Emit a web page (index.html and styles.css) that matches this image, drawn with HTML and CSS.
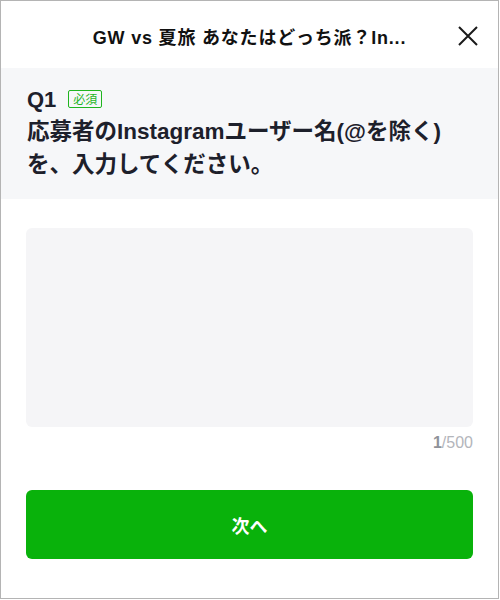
FILE: index.html
```html
<!DOCTYPE html>
<html lang="ja">
<head>
<meta charset="utf-8">
<title>GW vs 夏旅</title>
<link rel="stylesheet" href="styles.css">
</head>
<body>
<div class="frame">
  <header class="header">
    <div class="side"></div>
    <h1 class="title">GW vs 夏旅 あなたはどっち派？In...</h1>
    <div class="side close">
      <svg width="20" height="20" viewBox="0 0 20 20" aria-label="閉じる">
        <path d="M1 1 L19 19 M19 1 L1 19" stroke="#1a1a1a" stroke-width="2" fill="none"/>
      </svg>
    </div>
  </header>
  <section class="question">
    <div class="qrow">
      <span class="qnum">Q1</span>
      <span class="badge">必須</span>
    </div>
    <p class="qtext">応募者のInstagramユーザー名(@を除く)<br>を、入力してください。</p>
  </section>
  <main class="body">
    <div class="inputbox"></div>
    <div class="counter"><span class="cur">1</span>/500</div>
    <button class="next">次へ</button>
  </main>
</div>
</body>
</html>
```
FILE: styles.css
```css
html, body {
  margin: 0;
  padding: 0;
  background: #ffffff;
}
.frame {
  box-sizing: border-box;
  width: 499px;
  height: 599px;
  border: 1px solid #b4b4b4;
  display: flex;
  flex-direction: column;
  font-family: "Liberation Sans", "Noto Sans CJK JP", sans-serif;
  color: #1d202b;
  overflow: hidden;
}
.header {
  height: 67px;
  display: grid;
  grid-template-columns: 60px 1fr 60px;
  align-items: center;
  flex-shrink: 0;
}
.title {
  margin: 0;
  text-align: center;
  font-size: 18px;
  font-weight: 600;
  letter-spacing: 0.8px;
  white-space: nowrap;
  color: #111111;
  padding-top: 2px;
}
.close {
  display: flex;
  justify-content: center;
  align-items: center;
  padding-top: 2px;
}
.question {
  background: #f6f7f9;
  height: 131px;
  box-sizing: border-box;
  padding: 19px 26px 0;
  flex-shrink: 0;
}
.qrow {
  display: flex;
  align-items: center;
  gap: 12px;
  height: 25px;
}
.qnum {
  font-size: 22px;
  font-weight: bold;
  line-height: 25px;
}
.badge {
  box-sizing: border-box;
  height: 18px;
  padding: 0 4px;
  border: 1px solid #1fb51f;
  border-radius: 2px;
  color: #1fb51f;
  font-size: 12px;
  line-height: 16px;
  font-family: "Noto Sans CJK JP", sans-serif;
  margin-top: -2px;
}
.qtext {
  margin: 3px 0 0;
  font-size: 22.5px;
  font-weight: bold;
  line-height: 33px;
  white-space: nowrap;
}
.body {
  flex: 1;
  display: flex;
  flex-direction: column;
  padding: 29px 25px 0;
}
.inputbox {
  height: 199px;
  background: #f5f5f7;
  border-radius: 6px;
}
.counter {
  text-align: right;
  font-size: 16px;
  line-height: 20px;
  margin-top: 6px;
  color: #b3b5bb;
}
.cur {
  color: #8f929a;
  font-weight: bold;
}
.next {
  margin-top: 37px;
  height: 69px;
  border: none;
  border-radius: 6px;
  background: #09b20b;
  color: #ffffff;
  font-family: "Noto Sans CJK JP", sans-serif;
  font-size: 18px;
  font-weight: bold;
  padding: 0;
}
```
